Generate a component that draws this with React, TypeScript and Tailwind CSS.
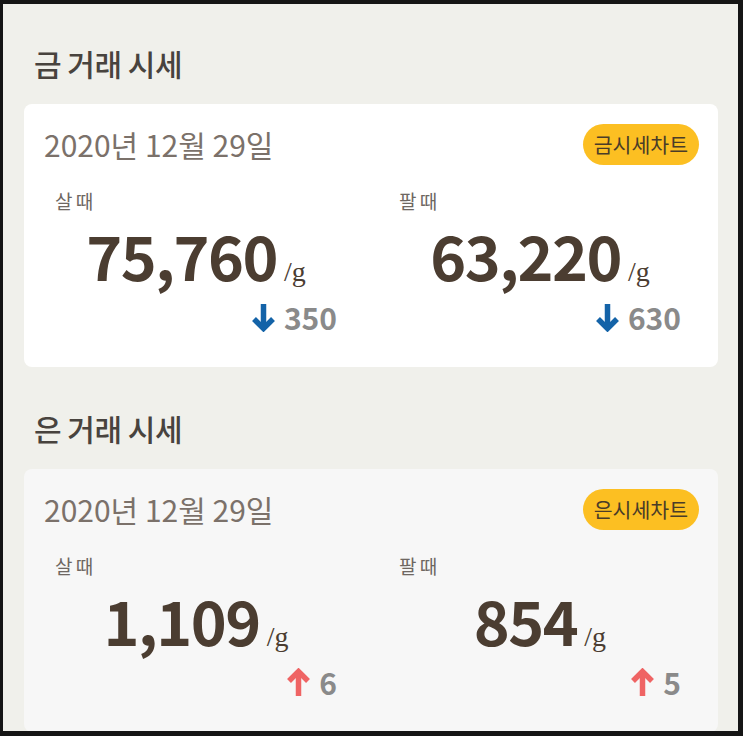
import React from 'react';

const sans = "font-['Noto_Sans_CJK_KR','Noto_Sans',sans-serif]";

const Arrow = ({ dir }: { dir: 'up' | 'down' }) => (
  <svg
    width="25"
    height="29"
    viewBox="0 0 25 29"
    className={dir === 'up' ? 'text-[#ef6464] rotate-180' : 'text-[#1463a8]'}
    fill="none"
    stroke="currentColor"
  >
    <path d="M12.5 1v25" strokeWidth="5.5" />
    <path d="M3 16l9.5 9.5L22 16" strokeWidth="5.5" strokeLinejoin="miter" />
  </svg>
);

type Price = { label: string; value: string; diff: string; dir: 'up' | 'down' };

const PriceCol = ({ p }: { p: Price }) => (
  <div className="flex flex-col px-[31px]">
    <div className="text-[19px] leading-[28px] text-[#6e6762] tracking-[-0.5px]">{p.label}</div>
    <div className="flex items-baseline justify-center mt-[10px]">
      <span className="text-[61px] leading-[60px] font-bold text-[#4b3d31] tracking-[-1.5px]">{p.value}</span>
      <span className="ml-[7px] text-[28px] font-['Liberation_Serif',serif] text-[#4b3d31]">/g</span>
    </div>
    <div className="flex items-center justify-end gap-[8px] mt-[7px]">
      <Arrow dir={p.dir} />
      <span className="text-[30px] leading-[34px] font-bold text-[#8a8a8a]">{p.diff}</span>
    </div>
  </div>
);

const Section = ({
  title,
  chart,
  bg,
  buy,
  sell,
}: {
  title: string;
  chart: string;
  bg: string;
  buy: Price;
  sell: Price;
}) => (
  <section>
    <h2 className="pl-[10px] text-[30px] leading-[40px] font-medium text-[#48433e] tracking-[-0.5px]">{title}</h2>
    <div className={`mt-[21px] rounded-[8px] ${bg} pt-[20px] pb-[33px]`}>
      <div className="flex items-center justify-between pl-[20px] pr-[19px]">
        <span className="text-[30px] leading-[41px] text-[#7b716a]">2020년 12월 29일</span>
        <span className="h-[41px] rounded-full bg-[#fcbf22] px-[11px] text-[20.5px] leading-[41px] text-[#4a3c28]">
          {chart}
        </span>
      </div>
      <div className="grid grid-cols-[344px_344px] mt-[22px]">
        <PriceCol p={buy} />
        <PriceCol p={sell} />
      </div>
    </div>
  </section>
);

export default function App() {
  return (
    <div className={`h-[736px] w-[743px] bg-[#151515] pt-[4px] pl-[3px] pr-[5px] pb-[5px] ${sans}`}>
      <div className="h-full overflow-hidden bg-[#f0f0eb] pl-[21px] pr-[20px] pt-[39px]">
        <Section
          title="금 거래 시세"
          chart="금시세차트"
          bg="bg-white"
          buy={{ label: '살 때', value: '75,760', diff: '350', dir: 'down' }}
          sell={{ label: '팔 때', value: '63,220', diff: '630', dir: 'down' }}
        />
        <div className="h-[41px]" />
        <Section
          title="은 거래 시세"
          chart="은시세차트"
          bg="bg-[#f7f7f7]"
          buy={{ label: '살 때', value: '1,109', diff: '6', dir: 'up' }}
          sell={{ label: '팔 때', value: '854', diff: '5', dir: 'up' }}
        />
      </div>
    </div>
  );
}
